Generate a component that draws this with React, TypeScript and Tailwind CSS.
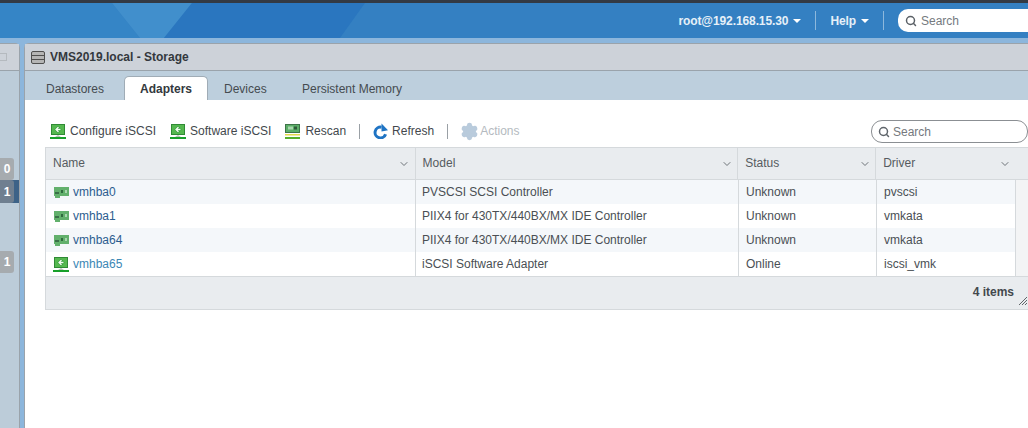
import { ChevronDown, Search, Settings } from 'lucide-react';

// table rows
const rows = [
  { name: 'vmhba0', model: 'PVSCSI SCSI Controller', status: 'Unknown', driver: 'pvscsi', sw: false },
  { name: 'vmhba1', model: 'PIIX4 for 430TX/440BX/MX IDE Controller', status: 'Unknown', driver: 'vmkata', sw: false },
  { name: 'vmhba64', model: 'PIIX4 for 430TX/440BX/MX IDE Controller', status: 'Unknown', driver: 'vmkata', sw: false },
  { name: 'vmhba65', model: 'iSCSI Software Adapter', status: 'Online', driver: 'iscsi_vmk', sw: true },
];

function SoftwareIcon() {
  return (
    <svg width="16" height="15" viewBox="0 0 16 15" className="shrink-0">
      <rect x="1.5" y="0.5" width="13" height="10" fill="#55b84f" stroke="#2f8a35" />
      <path d="M8 1.8 4.4 5.5 8 9.2 11.6 5.5z" fill="#2f9a38" />
      <path d="M8.5 3 6 5.5l2.5 2.5M6.5 5.5h4" fill="none" stroke="#f2fbef" strokeWidth="1.3" />
      <path d="M5 13l3-2 3 2z" fill="#b8c4b8" />
      <rect x="0" y="13" width="16" height="2" fill="#18a02a" />
    </svg>
  );
}

function CardIcon() {
  return (
    <svg width="15" height="15" viewBox="0 0 15 15" className="shrink-0">
      <rect x="0.5" y="0.5" width="14" height="8" fill="#5cae68" stroke="#3d7448" />
      <rect x="3" y="2.5" width="5" height="3" fill="#a9d7ae" />
      <rect x="9" y="2.5" width="3" height="3" fill="#2f5a3a" />
      <rect x="0" y="10" width="15" height="1.5" fill="#e3d94a" />
      <rect x="0" y="13" width="15" height="2" fill="#58b02a" />
    </svg>
  );
}

function HbaIcon() {
  return (
    <svg width="15" height="11" viewBox="0 0 15 11" className="shrink-0">
      <path d="M0 0h15v9H6v2H1V9H0z" fill="#62b06c" />
      <rect x="1" y="5" width="4" height="2" fill="#3a6f48" />
      <rect x="7" y="3" width="2" height="3" fill="#2f6a3e" />
      <rect x="11" y="3" width="2" height="3" fill="#a8d6ae" />
    </svg>
  );
}

function RefreshIcon() {
  return (
    <svg width="16" height="16" viewBox="0 0 16 16" className="shrink-0">
      <path d="M12.6 11.2A5.4 5.4 0 1 1 8.5 4.2" fill="none" stroke="#1f74c4" strokeWidth="3" />
      <path d="M8.5 0.5v8l6.5-1.2z" fill="#1f74c4" />
    </svg>
  );
}

function Caret() {
  return <span className="ml-[5px] inline-block border-x-[4px] border-t-[4px] border-x-transparent border-t-white" />;
}

function ColHead({ title, className }: { title: string; className: string }) {
  return (
    <div className={`flex items-center justify-between pb-[2px] pl-[7px] text-[#565b60] ${className}`}>
      <span>{title}</span>
      <ChevronDown size={12} className="mt-[2px] text-[#6d7378]" />
    </div>
  );
}

export default function App() {
  return (
    <div className="flex h-[428px] w-[1028px] flex-col overflow-hidden bg-[#8cb6dc] text-[12px] font-['Liberation_Sans',Arial,sans-serif]">
      <div className="h-[3px] shrink-0 bg-[#333a44]" />
      {/* top bar */}
      <div className="relative flex h-[35px] shrink-0 items-center justify-end overflow-hidden bg-[#3480c2] text-white">
        <svg width="620" height="35" className="absolute left-0 top-0">
          <rect width="620" height="35" fill="#3480c2" />
          <polygon points="0,0 112,0 140,35 0,35" fill="#3585c6" />
          <polygon points="112,0 192,0 164,35 140,35" fill="#418fcc" />
          <polygon points="192,0 365,0 340,35 164,35" fill="#2a76bf" />
        </svg>
        <div className="relative flex items-center font-semibold tracking-[-0.1px] text-[#e6f0f8]">
          <span className="flex items-center">root@192.168.15.30<Caret /></span>
          <span className="mx-[14px] h-[19px] w-px bg-[#8db8dc]" />
          <span className="flex items-center">Help<Caret /></span>
          <span className="mx-[14px] h-[19px] w-px bg-[#8db8dc]" />
          <div className="flex h-[23px] w-[130px] items-center gap-[4px] rounded-l-[10px] bg-white pl-[7px] font-normal tracking-normal text-[#757a7e]">
            <Search size={12} strokeWidth={3} className="text-[#5a6066]" />
            <span>Search</span>
          </div>
        </div>
      </div>

      <div className="flex min-h-0 flex-1 pt-[5px]">
        {/* collapsed left panel */}
        <div className="flex w-[20px] shrink-0 flex-col rounded-tr-[5px] border-r border-t border-[#9aa3ab] bg-[#bcccd9]">
          <div className="flex h-[27px] shrink-0 items-center border-b border-[#9aa3ab] bg-[#cdd2d9]">
            <span className="ml-[-2px] h-[8px] w-[9px] border border-[#b5babf]" />
          </div>
          <div className="mt-[87px] flex h-[22px] w-[14px] items-center justify-center rounded-r-[3px] bg-[#a6abaf] font-bold text-white">0</div>
          <div className="flex h-[23px] w-[19px] items-center justify-start bg-[#3d6287]">
            <span className="flex h-[23px] w-[14px] items-center justify-center rounded-r-[3px] bg-[#6f7f90] font-bold text-white">1</span>
          </div>
          <div className="mt-[48px] flex h-[22px] w-[14px] items-center justify-center rounded-r-[3px] bg-[#a6abaf] font-bold text-white">1</div>
        </div>

        {/* storage panel */}
        <div className="ml-[4px] flex min-w-0 flex-1 flex-col rounded-tl-[5px] border-l border-t border-[#9aa3ab] bg-white">
          <div className="flex h-[27px] shrink-0 items-center gap-[4px] border-b border-[#9aa3ab] bg-[#cdd2d9] pl-[6px] font-bold text-[#33383d]">
            <svg width="14" height="13" viewBox="0 0 14 13" className="shrink-0">
              <rect x="0.5" y="0.5" width="13" height="12" rx="1.5" fill="#b5b5b5" stroke="#4f4f4f" />
              <path d="M1 4.5h12M1 8.5h12" stroke="#4f4f4f" />
            </svg>
            <span className="ml-px">VMS2019.local - Storage</span>
          </div>

          <div className="flex h-[29px] shrink-0 items-end bg-[#bdcfdd] pl-[21px] text-[#454b50]">
            <div className="flex h-[24px] w-[78px] items-center pt-px">Datastores</div>
            <div className="flex h-[24px] w-[84px] items-center justify-center rounded-t-[5px] border-x border-t border-[#a0acb6] bg-white pt-px font-bold text-[#33383d]">Adapters</div>
            <div className="flex h-[24px] w-[94px] items-center pl-[16px] pt-px">Devices</div>
            <div className="flex h-[24px] items-center pt-px">Persistent Memory</div>
          </div>

          {/* toolbar */}
          <div className="flex h-[47px] shrink-0 items-end pb-[5px] pl-[25px] text-[#43484d]">
            <div className="flex h-[22px] flex-1 items-center">
              <span className="flex items-center gap-[4px]"><SoftwareIcon />Configure iSCSI</span>
              <span className="ml-[14px] flex items-center gap-[4px]"><SoftwareIcon />Software iSCSI</span>
              <span className="ml-[14px] flex items-center gap-[5px]"><CardIcon />Rescan</span>
              <span className="mx-[13px] h-[15px] w-px bg-[#9aa0a5]" />
              <span className="flex items-center gap-[3px]"><RefreshIcon />Refresh</span>
              <span className="ml-[13px] mr-[12px] h-[15px] w-px bg-[#9aa0a5]" />
              <span className="flex items-center gap-[1px] text-[#b4bac0]"><Settings size={19} fill="#b9cbdc" className="text-[#b9cbdc]" />Actions</span>
            </div>
            <div className="mb-[-1px] flex h-[23px] w-[157px] shrink-0 items-center gap-[3px] rounded-[11px] border border-[#8b8f93] pl-[6px] text-[#75797d]">
              <Search size={12} strokeWidth={3} className="text-[#5f656b]" />
              <span>Search</span>
            </div>
          </div>

          {/* adapters table */}
          <div className="ml-[20px] flex h-[163px] shrink-0 flex-col border-b border-l border-t border-[#d5d9dc]">
            <div className="flex h-[32px] shrink-0 border-b border-[#d5d9dc] bg-[#e9ecef]">
              <ColHead title="Name" className="w-[370px] border-r border-[#d5d9dc] pr-[5px]" />
              <ColHead title="Model" className="w-[323px] border-r border-[#d5d9dc] pr-[4px]" />
              <ColHead title="Status" className="w-[138px] border-r border-[#d5d9dc] pr-[4px]" />
              <ColHead title="Driver" className="w-[152px] pr-[17px]" />
            </div>
            <div className="flex h-[97px] shrink-0 border-b border-[#d5d9dc]">
              <div className="w-[970px] shrink-0">
                {rows.map((row, i) => (
                  <div key={row.name} className={`flex h-[24px] items-center text-[#4a4f54] ${i % 2 === 0 ? 'bg-[#f4f7fa]' : 'bg-white'}`}>
                    <div className="flex h-full w-[370px] items-center gap-[4px] border-r border-[#d5d9dc] pl-[7px]">
                      <span className="flex w-[16px] justify-center">{row.sw ? <SoftwareIcon /> : <HbaIcon />}</span>
                      <span className={row.sw ? 'text-[#3b87b5]' : 'text-[#2c5d8f]'}>{row.name}</span>
                    </div>
                    <div className="flex h-full w-[323px] items-center border-r border-[#d5d9dc] pl-[6px]">{row.model}</div>
                    <div className="flex h-full w-[138px] items-center border-r border-[#d5d9dc] pl-[7px]">{row.status}</div>
                    <div className="flex h-full flex-1 items-center border-r border-[#d5d9dc] pl-[7px]">{row.driver}</div>
                  </div>
                ))}
              </div>
              <div className="flex-1 bg-[#f3f4f5]" />
            </div>
            <div className="relative flex min-h-0 flex-1 items-center justify-end bg-[#e9ecef] pb-[2px] pr-[14px] font-bold text-[#43484d]">
              4 items
              <svg width="8" height="8" viewBox="0 0 8 8" className="absolute bottom-[4px] right-[1px]">
                <path d="M0 8 8 0M3 8l5-5M6 8l2-2" stroke="#5f6468" strokeWidth="1" />
              </svg>
            </div>
          </div>
        </div>
      </div>
    </div>
  );
}
